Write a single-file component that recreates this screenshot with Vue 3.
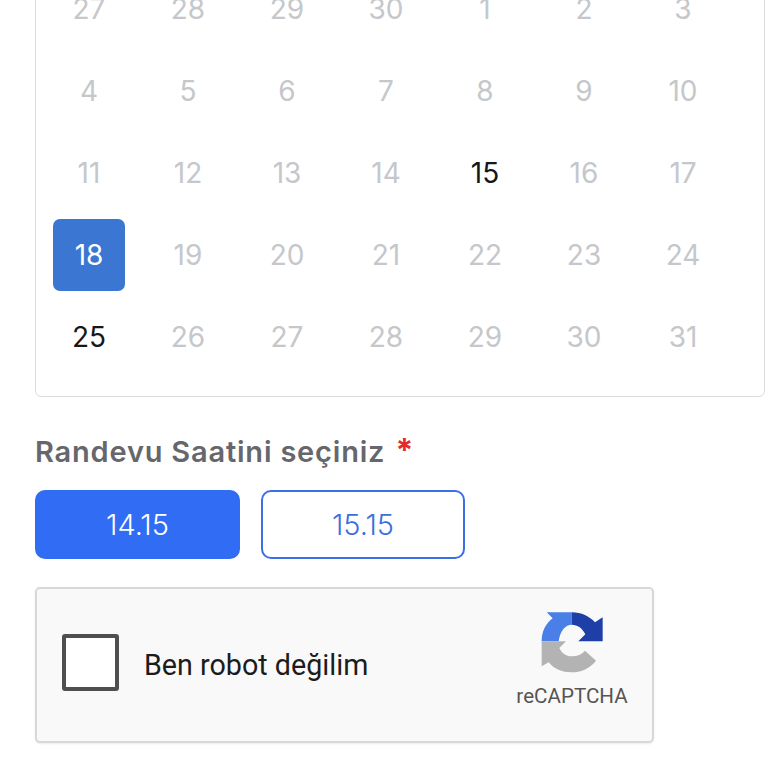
<script setup>
const rows = [
  [27, 28, 29, 30, 1, 2, 3],
  [4, 5, 6, 7, 8, 9, 10],
  [11, 12, 13, 14, 15, 16, 17],
  [18, 19, 20, 21, 22, 23, 24],
  [25, 26, 27, 28, 29, 30, 31]
]
const days = rows.flatMap((row, r) => row.map((day, c) => ({ key: r + '-' + c, day, r, c })))

function dayClass(d) {
  if (d.r === 3 && d.c === 0) return 'selected'
  if ((d.r === 2 && d.c === 4) || (d.r === 4 && d.c === 0)) return 'available'
  return ''
}
</script>

<template>
  <div class="page">
    <div class="calendar">
      <div v-for="d in days" :key="d.key" class="day" :class="dayClass(d)">{{ d.day }}</div>
    </div>

    <h3 class="title">Randevu Saatini seçiniz <span class="req">*</span></h3>

    <div class="slots">
      <button class="slot active">14.15</button>
      <button class="slot">15.15</button>
    </div>

    <div class="captcha">
      <div class="check"></div>
      <div class="check-label">Ben robot değilim</div>
      <div class="brand">
        <svg class="logo" viewBox="123 96 186 186">
          <path fill="#4a7fe8" d="M125 187C125 160 135 135 158 118L140 100H215V137C197 137 180 155 176 187Z" />
          <path fill="#1f3fa8" d="M215 100C245 100 268 112 285 130L308 115V187H235L256 166C248 148 233 137 215 137Z" />
          <path fill="#b3b3b3" d="M125 187H198L178 207C186 224 200 232 215 232C232 232 245 226 255 215L288 245C268 270 242 280 215 280C185 280 162 270 146 250L125 262Z" />
        </svg>
        <div class="brand-name">reCAPTCHA</div>
      </div>
    </div>
  </div>
</template>

<style scoped>
.page {
  width: 768px;
  height: 768px;
  padding-left: 35px;
  box-sizing: border-box;
  overflow: hidden;
  font-family: Inter, "Liberation Sans", sans-serif;
}

.calendar {
  width: 730px;
  box-sizing: border-box;
  margin-top: -28px;
  padding: 0 0 23px 3.5px;
  display: grid;
  grid-template-columns: repeat(7, 99px);
  grid-auto-rows: 72px;
  row-gap: 10px;
  border: 1px solid #dcdcdc;
  border-radius: 6px;
}

.day {
  width: 72px;
  height: 72px;
  justify-self: center;
  display: flex;
  align-items: center;
  justify-content: center;
  font-size: 28px;
  color: #c5c7cb;
  border-radius: 7px;
}

.day.available {
  color: #16171a;
}

.day.selected {
  background: #3a76d2;
  color: #fff;
}

.title {
  margin: 34px 0 0;
  height: 39px;
  line-height: 39px;
  font-size: 29px;
  font-weight: 600;
  letter-spacing: 0.8px;
  color: #66676c;
}

.req {
  position: relative;
  top: 0;
  margin-left: 2px;
  color: #e32b2b;
  font-size: 32px;
  font-weight: 700;
}

.slots {
  display: flex;
  gap: 21px;
  margin-top: 20px;
}

.slot {
  width: 205px;
  height: 69px;
  box-sizing: border-box;
  border: 2px solid #3b6fe8;
  border-radius: 10px;
  background: #fff;
  color: #3b6fe0;
  font-family: inherit;
  font-size: 29px;
  font-weight: 300;
  padding: 0;
}

.slot + .slot {
  width: 204px;
}

.slot.active {
  background: #316cf4;
  border-color: #316cf4;
  color: #fff;
}

.captcha {
  width: 619px;
  height: 156px;
  box-sizing: border-box;
  margin-top: 28px;
  display: flex;
  align-items: center;
  background: #f9f9f9;
  border: 2px solid #d8d8d8;
  border-radius: 5px;
  box-shadow: 0 1px 2px rgba(0, 0, 0, 0.08);
  font-family: Roboto, sans-serif;
}

.check {
  width: 57px;
  height: 57px;
  box-sizing: border-box;
  margin-left: 25px;
  margin-bottom: 6px;
  background: #fff;
  border: 4px solid #4f4f4f;
  border-radius: 3px;
}

.check-label {
  margin-left: 25px;
  font-size: 28.7px;
  color: #1c1c1c;
}

.brand {
  margin-left: auto;
  margin-bottom: 11px;
  width: 160px;
  display: flex;
  flex-direction: column;
  align-items: center;
}

.logo {
  display: block;
  width: 62px;
  height: 62px;
}

.brand-name {
  margin-top: 10px;
  font-size: 20.6px;
  line-height: 26px;
  color: #555;
}
</style>
